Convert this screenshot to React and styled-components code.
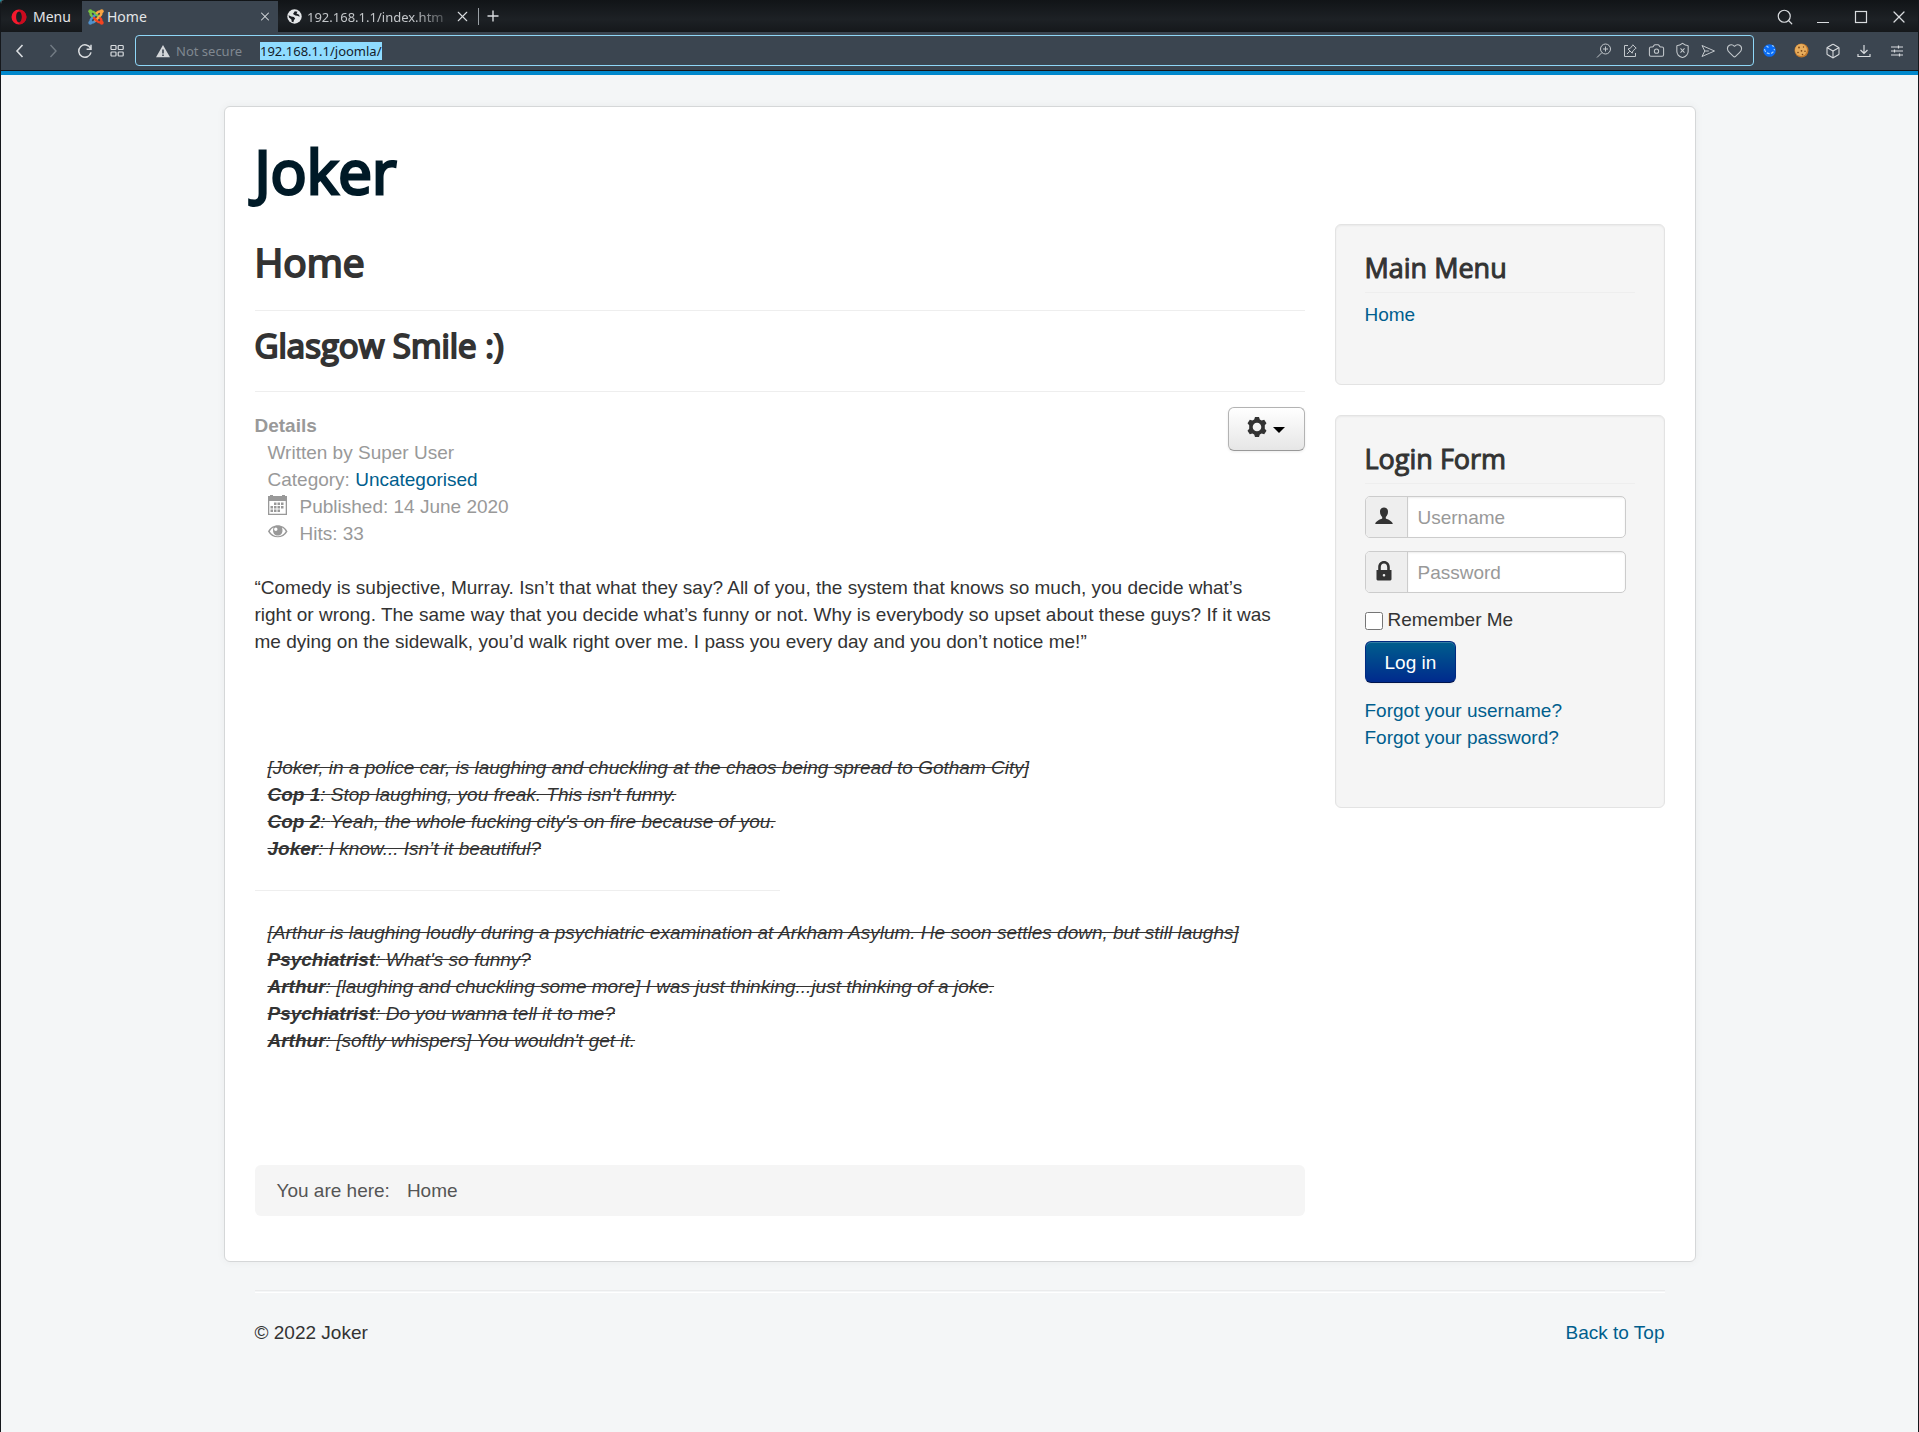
import React, { useEffect, useRef } from "react";
import styled, { createGlobalStyle, css } from "styled-components";
import { Box, Camera, Heart, Search, ShieldX, X } from "lucide-react";

const GlobalStyle = createGlobalStyle`
  *, *::before, *::after { box-sizing: border-box; }
  body {
    margin: 0;
    background: #1f93a5;
    color: #333;
    font: 19px/27px "Liberation Sans", Arial, sans-serif;
  }
  h1, h2, h3, p, ul, dl, dd { margin: 0; padding: 0; }
`;

const uiFont = css`
  font-family: "Noto Sans", sans-serif;
  font-size: 13px;
  line-height: 18px;
`;

/* ---------- browser window ---------- */

const Window = styled.div`
  display: flex;
  flex-direction: column;
  min-height: 100vh;
  border: solid #15181c;
  border-width: 0 1px;
  border-top-left-radius: 4px;
  background: #f4f6f7;
  overflow: hidden;
`;

const TabBar = styled.div`
  ${uiFont}
  display: flex;
  align-items: stretch;
  height: 32px;
  padding-top: 1px;
  background: linear-gradient(#111417, #1d2125 60%, #15181b);
  color: #e4e6e8;
`;

const MenuButton = styled.button`
  ${uiFont}
  display: flex;
  align-items: center;
  gap: 6px;
  width: 81px;
  padding: 0 0 0 10px;
  border: 0;
  background: none;
  color: inherit;
  font-size: 14px;
`;

const Tab = styled.div`
  display: flex;
  align-items: center;
  gap: 3px;
  width: ${(p) => (p.$active ? 196 : 200)}px;
  padding: 0 6px;
  background: ${(p) => (p.$active ? "#3b4550" : "transparent")};
  color: ${(p) => (p.$active ? "#e4e6e8" : "#c3c6c9")};
  font-size: ${(p) => (p.$active ? 14 : 13)}px;
`;

const TabTitle = styled.span`
  flex: 1;
  min-width: 0;
  overflow: hidden;
  white-space: nowrap;
  ${(p) => p.$fade && "mask-image: linear-gradient(90deg, #000 75%, rgba(0, 0, 0, 0.2));"}
`;

const IconButton = styled.button`
  display: flex;
  align-items: center;
  justify-content: center;
  flex: none;
  width: ${(p) => p.$w || 26}px;
  height: ${(p) => p.$h || 26}px;
  padding: 0;
  border: 0;
  background: none;
  color: ${(p) => p.$color || "#d9dcdf"};
`;

const TabDivider = styled.span`
  align-self: center;
  width: 1px;
  height: 17px;
  background: #9aa0a5;
`;

const WindowControls = styled.div`
  display: flex;
  align-items: center;
  margin-left: auto;
`;

const Toolbar = styled.div`
  display: flex;
  align-items: center;
  height: 39px;
  padding-bottom: 1px;
  border-bottom: 1px solid #15181c;
  background: #3b4550;
`;

const NavButtons = styled.div`
  display: flex;
  padding: 0 2px 0 3px;
`;

const AddressBar = styled.div`
  display: flex;
  align-items: center;
  flex: 1;
  min-width: 0;
  height: 31px;
  padding: 0 6px 0 20px;
  border: 1px solid #8fd7f7;
  border-radius: 4px;
`;

const Security = styled.span`
  ${uiFont}
  display: flex;
  align-items: center;
  gap: 6px;
  width: 104px;
  color: #808890;
  white-space: nowrap;
`;

const AddressInput = styled.input`
  ${uiFont}
  flex: 1;
  min-width: 0;
  height: 18px;
  padding: 0;
  border: 0;
  outline: 0;
  background: none;
  color: #e4e6e8;
  &::selection { background: #8fdcff; color: #14212b; }
`;

const Extensions = styled.div`
  display: flex;
  padding-right: 5px;
`;

/* ---------- site ---------- */

const Site = styled.div`
  flex: 1;
  padding: 31px 20px 0;
  border-top: 4px solid #0088cc;
`;

const Card = styled.div`
  max-width: 1472px;
  margin: 0 auto;
  padding: 30px 30px 45px;
  border: 1px solid #d5d7d8;
  border-radius: 6px;
  background: #fff;
  box-shadow: 0 0 9px rgba(0, 0, 0, 0.05);
`;

const heading = css`
  font-family: "Open Sans", sans-serif;
  font-weight: 400;
  color: #333;
`;

const SiteTitle = styled.a`
  ${heading}
  display: block;
  margin-bottom: 19px;
  font-size: 60px;
  line-height: 68px;
  color: #001a27;
  text-decoration: none;
  -webkit-text-stroke: 3px #001a27;
`;

const Columns = styled.div`
  display: grid;
  grid-template-columns: minmax(0, 1fr) 330px;
  gap: 30px;
`;

const PageTitle = styled.h1`
  ${heading}
  padding-bottom: 10px;
  border-bottom: 1px solid #eee;
  font-size: 39px;
  line-height: 76px;
  -webkit-text-stroke: 2px #333;
`;

const ItemTitle = styled.h2`
  ${heading}
  padding-bottom: 10px;
  border-bottom: 1px solid #eee;
  font-size: 33px;
  line-height: 70px;
  -webkit-text-stroke: 2px #333;
`;

const ItemHead = styled.div`
  display: flex;
  justify-content: space-between;
  align-items: flex-start;
  padding: 15px 0 27px;
`;

const Details = styled.dl`
  padding-top: 5px;
  color: #999;
`;

const DetailsTerm = styled.dt`
  font-weight: 700;
`;

const Detail = styled.dd`
  display: flex;
  padding-left: 13px;
  white-space: pre;
`;

const DetailIcon = styled.span`
  width: 32px;
  padding-top: 2px;
  line-height: 0;
`;

const Link = styled.a`
  color: #005e8d;
  text-decoration: none;
`;

const GearButton = styled.button`
  display: flex;
  justify-content: center;
  align-items: center;
  gap: 6px;
  width: 77px;
  height: 44px;
  padding: 0 0 4px;
  border: 1px solid #b3b3b3;
  border-bottom-color: #999;
  border-radius: 6px;
  background: linear-gradient(#fff, #e6e6e6);
  box-shadow: 0 1px 3px rgba(0, 0, 0, 0.08);
  color: #333;
`;

const Caret = styled.span`
  margin-top: 6px;
  border: 6px solid transparent;
  border-top-color: #000;
  border-bottom: 0;
`;

const Quote = styled.p`
  max-width: 1024px;
  margin-bottom: 99px;
`;

const Dialogue = styled.div`
  padding-left: 13px;
  font-style: italic;
  text-decoration: line-through;
`;

const ShortRule = styled.hr`
  width: 50%;
  margin: 28px 0;
  border: 0;
  border-top: 1px solid #eee;
`;

const Breadcrumb = styled.nav`
  display: flex;
  gap: 17px;
  margin-top: 111px;
  padding: 12px 22px;
  border-radius: 6px;
  background: #f5f5f5;
  color: #555;
`;

const Sidebar = styled.aside`
  display: flex;
  flex-direction: column;
  align-items: stretch;
  gap: 30px;
`;

const Well = styled.section`
  padding: 29px 29px 56px;
  border: 1px solid #e3e3e3;
  border-radius: 6px;
  background: #f5f5f5;
  box-shadow: inset 0 1px 2px rgba(0, 0, 0, 0.05);
`;

const WellTitle = styled.h3`
  ${heading}
  margin-bottom: 8px;
  padding-bottom: 10px;
  border-bottom: 1px solid #eee;
  font-size: 27px;
  line-height: 28px;
  -webkit-text-stroke: 1px #333;
`;

const LinkList = styled.ul`
  list-style: none;
`;

const LoginFields = styled.form`
  display: flex;
  flex-direction: column;
  align-items: flex-start;
  padding: 4px 0 14px;
`;

const Field = styled.div`
  display: flex;
  width: 261px;
  height: 42px;
  margin-bottom: 13px;
  border: 1px solid #ccc;
  border-radius: 5px;
  background: #fff;
  overflow: hidden;
`;

const FieldLabel = styled.label`
  display: flex;
  justify-content: center;
  align-items: center;
  width: 42px;
  padding: 0 4px 3px 0;
  border-right: 1px solid #ccc;
  background: #eee;
  color: #333;
`;

const FieldInput = styled.input`
  flex: 1;
  min-width: 0;
  padding: 0 10px;
  border: 0;
  background: none;
  box-shadow: inset 0 1px 2px rgba(0, 0, 0, 0.08);
  color: #555;
  font: inherit;
  &::placeholder { color: #999; opacity: 1; }
`;

const Remember = styled.label`
  display: flex;
  align-items: center;
  gap: 5px;
  padding-bottom: 8px;
`;

const CheckBox = styled.input`
  width: 18px;
  height: 18px;
  margin: 3px 0 0;
`;

const LoginButton = styled.button`
  height: 42px;
  padding: 0 19px;
  border: 1px solid #002a80;
  border-bottom-color: #00154d;
  border-radius: 6px;
  background: linear-gradient(#005e8d, #002a8d);
  box-shadow: inset 0 1px 0 rgba(255, 255, 255, 0.2), 0 1px 2px rgba(0, 0, 0, 0.05);
  color: #fff;
  font: inherit;
`;

const Footer = styled.footer`
  display: flex;
  justify-content: space-between;
  max-width: 1410px;
  margin: 28px auto 0;
  padding-top: 28px;
  border-top: 1px solid #eaebec;
  box-shadow: inset 0 1px 0 #f4f6f7, inset 0 2px 0 #fff;
`;

/* ---------- drawings ---------- */

const Glyph = ({ size = 16, w = 1, children, ...rest }) => (
  <svg width={size} height={size} viewBox={`0 0 ${size} ${size}`} fill="none" stroke="currentColor" strokeWidth={w} aria-hidden="true" {...rest}>
    {children}
  </svg>
);

const OperaLogo = () => (
  <Glyph size={16} stroke="none">
    <path fill="#f5192d" fillRule="evenodd" d="M8 0.5a7.5 7.5 0 1 0 0 15a7.5 7.5 0 1 0 0-15M8 2.6c1.8 0 2.9 2.4 2.9 5.4s-1.100 5.400-2.900 5.400s-2.900-2.400-2.900-5.400s1.100-5.400 2.900-5.400" />
    <path fill="#a70014" fillRule="evenodd" d="M8 .5a7.500 7.500 0 0 1 0 15l0-2.100c1.800 0 2.900-2.400 2.900-5.400s-1.100-5.400-2.900-5.400z" opacity=".55" />
  </Glyph>
);

const JoomlaLogo = () => (
  <Glyph size={16} w={2.4} strokeLinecap="round" strokeLinejoin="round">
    <path stroke="#5091cd" d="M3 13C1.800 11 3 10 4.200 8.800L8.500 4.500M3 13C5 14.200 6 13.200 7 12.200" />
    <path stroke="#7ac143" d="M3 3C5 1.800 6 3 7.200 4.200L11.500 8.500M3 3C1.800 5 2.800 6 3.800 7" />
    <path stroke="#f9a541" d="M13 3C14.200 5 13 6 11.800 7.200L7.500 11.500M13 3C11 1.800 10 2.800 9 3.800" />
    <path stroke="#f44321" d="M13 13C11 14.200 10 13 8.800 11.800L6 9M13 13C14.200 11 13.200 10 12.200 9" />
    <g stroke="none">
      <circle cx="2.300" cy="2.300" r="2" fill="#7ac143" /><circle cx="13.700" cy="2.300" r="2" fill="#f9a541" />
      <circle cx="13.700" cy="13.700" r="2" fill="#f44321" /><circle cx="2.300" cy="13.700" r="2" fill="#5091cd" />
    </g>
  </Glyph>
);

const Globe = () => (
  <Glyph size={15} stroke="none">
    <circle cx="7.500" cy="7.500" r="7.200" fill="#e4e6e8" />
    <path fill="#1a1d21" d="M7.800 2.200l2.700.6-1 1.700 2.600 1.200.6 2-2.400-.9-2-.2-2.300-1.600zM1.600 6.200l2.700 1.300 2.600.4 1.300 1.700-1.300 1.700-.5 2-1.700-.5-.3-2.200L2 8.400z" />
  </Glyph>
);

const Warning = () => (
  <Glyph size={14} stroke="none">
    <path fill="#d4d7da" fillRule="evenodd" d="M7 1l7 12.300H0zM6.200 5.400v4h1.600v-4zM6.200 10.400v1.600h1.600v-1.600z" />
  </Glyph>
);

const Back = () => <Glyph w={1.6}><path d="M10.500 2L5 8l5.500 6" /></Glyph>;
const Forward = () => <Glyph w={1.4}><path d="M5.500 2L11 8l-5.500 6" /></Glyph>;
const Reload = () => (
  <Glyph w={1.5}><path d="M13.600 5.500A6.200 6.200 0 1 0 14 9.400M14 1.800v4.400H9.600" /></Glyph>
);
const Grid = () => (
  <Glyph size={14} w={1.200}>
    <rect x="1" y="1.500" width="5" height="4" rx=".8" /><rect x="8.200" y="1.500" width="5" height="4" rx=".8" />
    <rect x="1" y="8" width="5" height="4" rx=".8" /><rect x="8.200" y="8" width="5" height="4" rx=".8" />
  </Glyph>
);
const ZoomLens = () => (
  <Glyph><circle cx="9.500" cy="6" r="5" /><path d="M6 9.500L1 14.500M9.500 3.500v5M7 6h5" /></Glyph>
);
const Pin = () => (
  <Glyph><path d="M6 2.500H2.500v11h11V10M5 11l2.800-2.800M6 6l4.200 4.200.6-2.200 2.600-2.400.8-.4L10.800 1.800l-.4.800L8.200 5.400z" /></Glyph>
);
const Send = () => <Glyph><path d="M2 2.500L14.500 8 2 13.500 4.800 8zM4.800 8h4" /></Glyph>;
const Download = () => <Glyph w={1.200}><path d="M8 2v8M4.500 7L8 10.400 11.500 7M2 11v2.500h12V11" /></Glyph>;
const Sliders = () => <Glyph size={14} w={1.200}><path d="M1 3h12M1 7h12M1 11h12M8.500 1.500v3M4.500 5.500v3M9.500 9.500v3" /></Glyph>;
const Minimise = () => <Glyph size={14}><path d="M1 12.500h12" /></Glyph>;
const Maximise = () => <Glyph size={14} w={1.200}><rect x="1.500" y="1.500" width="11" height="11" /></Glyph>;
const Plus = () => <Glyph size={12} w={1.400}><path d="M6 .5v11M.5 6h11" /></Glyph>;

const BlueBall = () => (
  <Glyph size={15} stroke="none">
    <circle cx="7.500" cy="7.500" r="6.300" fill="#0a6cf5" />
    <path fill="none" stroke="#9ed0ff" strokeWidth="1.200" strokeDasharray="3 1.500" d="M2.500 6C3.500 12 11 12.500 12.500 6M4.500 3l2 1.500M10 2.500l2 1" />
  </Glyph>
);
const Cookie = () => (
  <Glyph size={15} stroke="none">
    <circle cx="7.500" cy="7.500" r="7" fill="#c47a2c" /><circle cx="7" cy="7" r="6" fill="#e8ad5c" />
    <g fill="#7a4516"><circle cx="5" cy="4.500" r=".9" /><circle cx="9.500" cy="4" r=".7" /><circle cx="7.500" cy="7.800" r=".9" /><circle cx="4" cy="9.500" r=".8" /><circle cx="11" cy="8.200" r=".8" /><circle cx="8.500" cy="11.500" r=".8" /></g>
  </Glyph>
);

const Calendar = () => (
  <Glyph size={20} stroke="none">
    <path fill="currentColor" fillRule="evenodd" d="M0 1h2V0h3v1h9V0h3v1h2v19H0zM1.300 6v12.700h16.400V6z" />
    <g fill="currentColor">
      {[[6, 7.500], [9.500, 7.500], [13, 7.500], [2.500, 11], [6, 11], [9.500, 11], [13, 11], [2.500, 14.500], [6, 14.500], [9.500, 14.500]].map(([x, y]) => (
        <rect key={`${x}-${y}`} x={x} y={y} width="2.500" height="2.500" />
      ))}
    </g>
  </Glyph>
);
const Eye = () => (
  <Glyph size={20} stroke="none">
    <path transform="translate(0 2)" fill="currentColor" fillRule="evenodd" d="M0 7.500C4 -.8 15.500 -.8 19.500 7.500C15.500 15.300 4 15.300 0 7.500M1.800 7.500C5.500 13.800 14 13.800 17.700 7.500C16.800 5.500 15.500 4.200 14 3.400C15.800 9 12.500 11.600 9.800 11.600C7 11.600 3.800 9 5.500 3.400C4 4.200 2.700 5.500 1.800 7.500M7.800 3.600a1.700 1.700 0 1 0 0 3.400a1.700 1.700 0 1 0 0-3.400" />
  </Glyph>
);
const Gear = () => (
  <Glyph size={20} stroke="none">
    <path fill="currentColor" fillRule="evenodd" d="M8 0h4l.8 2.400 1.800 1 2.600-.6 2.300 3.400-1.700 2v3.600l1.700 2-2.300 3.400-2.600-.6-1.800 1L12 20H8l-.8-2.400-1.800-1-2.600.6L.5 13.800l1.700-2V8.200l-1.700-2 2.300-3.400 2.600.6 1.800-1zM10 5.700a4.300 4.300 0 1 0 0 8.600a4.300 4.300 0 1 0 0-8.600" />
  </Glyph>
);
const User = () => (
  <Glyph size={18} stroke="none">
    <path fill="currentColor" d="M9 .5c2.800 0 4 1.800 4 4.300 0 2.300-1 4.200-2.200 5.200v1.600c2.200 1 6.400 2.400 7 5.400H.2c.6-3 4.800-4.400 7-5.400V10C6 9 5 7.100 5 4.800 5 2.300 6.200.5 9 .5" />
  </Glyph>
);
const Lock = () => (
  <Glyph size={20} stroke="none">
    <path fill="currentColor" fillRule="evenodd" d="M2.500 9h1.700V6.200C4.200 2.400 6.700 0 10 0s5.800 2.400 5.800 6.200V9h1.700v9.500l-1 1h-13l-1-1zM6.800 9h6.400V6.200C13.200 3.800 12 2.400 10 2.400S6.800 3.800 6.800 6.200zM10 13a1.300 1.300 0 1 0 0 2.600A1.300 1.300 0 1 0 10 13" />
  </Glyph>
);

/* ---------- content ---------- */

const scenes = [
  [
    [null, "[Joker, in a police car, is laughing and chuckling at the chaos being spread to Gotham City]"],
    ["Cop 1", "Stop laughing, you freak. This isn't funny."],
    ["Cop 2", "Yeah, the whole fucking city's on fire because of you."],
    ["Joker", "I know... Isn’t it beautiful?"],
  ],
  [
    [null, "[Arthur is laughing loudly during a psychiatric examination at Arkham Asylum. He soon settles down, but still laughs]"],
    ["Psychiatrist", "What's so funny?"],
    ["Arthur", "[laughing and chuckling some more] I was just thinking...just thinking of a joke."],
    ["Psychiatrist", "Do you wanna tell it to me?"],
    ["Arthur", "[softly whispers] You wouldn't get it."],
  ],
];

const Scene = ({ lines }) => (
  <Dialogue>
    {lines.map(([who, line]) => (
      <p key={line}>
        {who && <b>{who}</b>}
        {who && ": "}
        {line}
      </p>
    ))}
  </Dialogue>
);

function BrowserChrome() {
  const address = useRef(null);
  useEffect(() => {
    address.current.focus();
    address.current.select();
  }, []);
  const thin = { size: 17, strokeWidth: 1.5 };
  return (
    <header>
      <TabBar>
        <MenuButton><OperaLogo />Menu</MenuButton>
        <Tab $active>
          <JoomlaLogo />
          <TabTitle>Home</TabTitle>
          <IconButton $w={14} aria-label="Close tab"><X size={17} strokeWidth={1.8} /></IconButton>
        </Tab>
        <Tab>
          <IconButton as="span" $w={20}><Globe /></IconButton>
          <TabTitle $fade>192.168.1.1/index.htm</TabTitle>
          <IconButton $w={20} aria-label="Close tab"><X size={17} strokeWidth={1.5} /></IconButton>
        </Tab>
        <TabDivider />
        <IconButton $w={28} $h={30} aria-label="New tab"><Plus /></IconButton>
        <WindowControls>
          <IconButton $w={39} aria-label="Search tabs"><Search size={18} strokeWidth={1.6} /></IconButton>
          <IconButton $w={38} aria-label="Minimise"><Minimise /></IconButton>
          <IconButton $w={38} aria-label="Maximise"><Maximise /></IconButton>
          <IconButton $w={38} aria-label="Close"><X size={20} strokeWidth={1.5} /></IconButton>
        </WindowControls>
      </TabBar>
      <Toolbar>
        <NavButtons>
          <IconButton $w={32} aria-label="Back"><Back /></IconButton>
          <IconButton $w={33} $color="#727b84" aria-label="Forward"><Forward /></IconButton>
          <IconButton $w={32} aria-label="Reload"><Reload /></IconButton>
          <IconButton $w={32} aria-label="Speed dial"><Grid /></IconButton>
        </NavButtons>
        <AddressBar>
          <Security><Warning />Not secure</Security>
          <AddressInput ref={address} aria-label="Address" defaultValue="192.168.1.1/joomla/" />
          <IconButton $color="#c3c8cc" aria-label="Zoom"><ZoomLens /></IconButton>
          <IconButton $color="#c3c8cc" aria-label="Pin page"><Pin /></IconButton>
          <IconButton $color="#c3c8cc" aria-label="Snapshot"><Camera {...thin} /></IconButton>
          <IconButton $color="#c3c8cc" aria-label="Blocker"><ShieldX {...thin} /></IconButton>
          <IconButton $color="#c3c8cc" aria-label="Send"><Send /></IconButton>
          <IconButton $color="#c3c8cc" aria-label="Bookmark"><Heart {...thin} /></IconButton>
        </AddressBar>
        <Extensions>
          <IconButton $w={31} aria-label="Sync extension"><BlueBall /></IconButton>
          <IconButton $w={32} aria-label="Cookie editor"><Cookie /></IconButton>
          <IconButton $w={31} aria-label="Extensions"><Box size={16} strokeWidth={1.6} /></IconButton>
          <IconButton $w={32} aria-label="Downloads"><Download /></IconButton>
          <IconButton $w={33} aria-label="Easy setup"><Sliders /></IconButton>
        </Extensions>
      </Toolbar>
    </header>
  );
}

export default function App() {
  return (
    <Window>
      <GlobalStyle />
      <BrowserChrome />
      <Site>
        <Card>
          <SiteTitle href="#">Joker</SiteTitle>
          <Columns>
            <main>
              <PageTitle>Home</PageTitle>
              <ItemTitle>Glasgow Smile :)</ItemTitle>
              <ItemHead>
                <Details>
                  <DetailsTerm>Details</DetailsTerm>
                  <Detail>Written by Super User</Detail>
                  <Detail>Category: <Link href="#">Uncategorised</Link></Detail>
                  <Detail><DetailIcon><Calendar /></DetailIcon>Published: 14 June 2020</Detail>
                  <Detail><DetailIcon><Eye /></DetailIcon>Hits: 33</Detail>
                </Details>
                <GearButton aria-label="Article options"><Gear /><Caret /></GearButton>
              </ItemHead>
              <Quote>
                “Comedy is subjective, Murray. Isn’t that what they say? All of you, the system that knows so much, you decide what’s right or wrong. The same way that you decide what’s funny or not. Why is everybody so upset about these guys? If it was me dying on the sidewalk, you’d walk right over me. I pass you every day and you don’t notice me!”
              </Quote>
              <Scene lines={scenes[0]} />
              <ShortRule />
              <Scene lines={scenes[1]} />
              <Breadcrumb aria-label="Breadcrumb">
                <span>You are here:</span>
                <span>Home</span>
              </Breadcrumb>
            </main>
            <Sidebar>
              <Well>
                <WellTitle>Main Menu</WellTitle>
                <LinkList>
                  <li><Link href="#">Home</Link></li>
                </LinkList>
              </Well>
              <Well>
                <WellTitle>Login Form</WellTitle>
                <LoginFields>
                  <Field>
                    <FieldLabel htmlFor="username" aria-label="Username"><User /></FieldLabel>
                    <FieldInput id="username" type="text" placeholder="Username" />
                  </Field>
                  <Field>
                    <FieldLabel htmlFor="password" aria-label="Password"><Lock /></FieldLabel>
                    <FieldInput id="password" type="password" placeholder="Password" />
                  </Field>
                  <Remember><CheckBox type="checkbox" />Remember Me</Remember>
                  <LoginButton type="button">Log in</LoginButton>
                </LoginFields>
                <LinkList>
                  <li><Link href="#">Forgot your username?</Link></li>
                  <li><Link href="#">Forgot your password?</Link></li>
                </LinkList>
              </Well>
            </Sidebar>
          </Columns>
        </Card>
        <Footer>
          <span>© 2022 Joker</span>
          <Link href="#">Back to Top</Link>
        </Footer>
      </Site>
    </Window>
  );
}
